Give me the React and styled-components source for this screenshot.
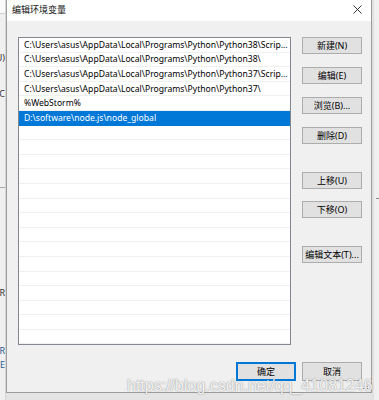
import styled, { createGlobalStyle } from 'styled-components';

const GlobalStyle = createGlobalStyle`
  html, body {
    margin: 0;
    padding: 0;
    background: #e6e6e6;
  }
  * {
    box-sizing: border-box;
  }
`;

const paths = [
  'C:\\Users\\asus\\AppData\\Local\\Programs\\Python\\Python38\\Scrip...',
  'C:\\Users\\asus\\AppData\\Local\\Programs\\Python\\Python38\\',
  'C:\\Users\\asus\\AppData\\Local\\Programs\\Python\\Python37\\Scrip...',
  'C:\\Users\\asus\\AppData\\Local\\Programs\\Python\\Python37\\',
  '%WebStorm%',
  'D:\\software\\node.js\\node_global',
];

const sideButtons = [
  { label: '新建(N)', top: 0 },
  { label: '编辑(E)', top: 13 },
  { label: '浏览(B)...', top: 13 },
  { label: '删除(D)', top: 13 },
  { label: '上移(U)', top: 28 },
  { label: '下移(O)', top: 12 },
  { label: '编辑文本(T)...', top: 28 },
];

const TOTAL_ROWS = 21;

export default function App() {
  const rows = Array.from({ length: TOTAL_ROWS }, (_, i) => paths[i] || '');

  return (
    <>
      <GlobalStyle />
      <Screen>
        <LeftPeek>
          <PeekTop />
          <PeekText $top={39}>(U)</PeekText>
          <PeekText $top={26}>C</PeekText>
          <PeekLine $top={88} />
          <PeekText $top={100}>R</PeekText>
          <PeekText $top={48} $blue>R</PeekText>
          <PeekText $top={4} $blue>DE</PeekText>
        </LeftPeek>

        <Dialog>
          <TitleBar>
            <Title>编辑环境变量</Title>
            <CloseButton>
              <svg width="9" height="9" viewBox="0 0 9 9">
                <path d="M0.5 0.5 L8.5 8.5 M8.5 0.5 L0.5 8.5" stroke="#222" strokeWidth="0.9" fill="none" />
              </svg>
            </CloseButton>
          </TitleBar>

          <Body>
            <Main>
              <PathList>
                {rows.map((text, i) => (
                  <Row key={i} $selected={i === 5}>
                    {text}
                  </Row>
                ))}
              </PathList>

              <SideColumn>
                {sideButtons.map((b) => (
                  <Button key={b.label} $top={b.top}>
                    {b.label}
                  </Button>
                ))}
              </SideColumn>
            </Main>

            <Footer>
              <Button $primary $tall>确定</Button>
              <Button $tall>取消</Button>
            </Footer>
          </Body>

          <Grip>
            <svg width="6" height="6" viewBox="0 0 6 6">
              <rect x="4" y="0" width="1" height="1" fill="#9a9a9a" />
              <rect x="2" y="2" width="1" height="1" fill="#9a9a9a" />
              <rect x="4" y="2" width="1" height="1" fill="#9a9a9a" />
              <rect x="0" y="4" width="1" height="1" fill="#9a9a9a" />
              <rect x="2" y="4" width="1" height="1" fill="#9a9a9a" />
              <rect x="4" y="4" width="1" height="1" fill="#9a9a9a" />
            </svg>
          </Grip>
        </Dialog>

        <RightPeek>
          <RightTick />
        </RightPeek>

        <Watermark>https://blog.csdn.net/qq_41081246</Watermark>
      </Screen>
    </>
  );
}

const Screen = styled.div`
  position: relative;
  width: 379px;
  height: 400px;
  overflow: hidden;
  display: flex;
  align-items: flex-start;
  background: #e4e4e4;
  font-family: 'Noto Sans', 'Noto Sans CJK SC', sans-serif;
  color: #000;
`;

const LeftPeek = styled.div`
  width: 6px;
  height: 400px;
  flex-shrink: 0;
  display: flex;
  flex-direction: column;
  background: #f0f0f0;
  overflow: hidden;
  border-right: 1px solid #d6d6d6;
`;

const PeekTop = styled.div`
  height: 14px;
  background: #fafafa;
  border-bottom: 1px solid #cfcfcf;
  flex-shrink: 0;
`;

const PeekText = styled.div`
  margin-top: ${(p) => p.$top}px;
  display: flex;
  justify-content: flex-end;
  white-space: nowrap;
  font-size: 9px;
  line-height: 10px;
  color: ${(p) => (p.$blue ? '#2a5b8f' : '#333')};
`;

const PeekLine = styled.div`
  margin-top: ${(p) => p.$top}px;
  height: 1px;
  background: #a8a8a8;
  flex-shrink: 0;
`;

const Dialog = styled.div`
  position: relative;
  width: 366px;
  height: 393px;
  flex-shrink: 0;
  display: flex;
  flex-direction: column;
  background: #f0f0f0;
  border: 1px solid #9c9c9c;
  border-top: none;
`;

const TitleBar = styled.div`
  height: 21px;
  flex-shrink: 0;
  display: flex;
  align-items: center;
  justify-content: space-between;
  padding: 0 6px 2px 5px;
  background: #fff;
`;

const Title = styled.span`
  font-size: 9px;
  line-height: 1;
  color: #111;
`;

const CloseButton = styled.div`
  display: flex;
  align-items: center;
  justify-content: center;
  width: 16px;
  height: 16px;
`;

const Body = styled.div`
  flex: 1;
  display: flex;
  flex-direction: column;
  padding: 16px 9px 10px 11px;
`;

const Main = styled.div`
  display: flex;
  gap: 11px;
`;

const PathList = styled.div`
  width: 274px;
  height: 308px;
  background: #fff;
  border: 1px solid #828790;
  overflow: hidden;
  display: flex;
  flex-direction: column;
`;

const Row = styled.div`
  height: 14.6px;
  flex-shrink: 0;
  display: flex;
  align-items: center;
  padding: 0 5px;
  font-size: 8.6px;
  white-space: nowrap;
  overflow: hidden;
  color: ${(p) => (p.$selected ? '#fff' : '#000')};
  background: ${(p) => (p.$selected ? '#0078d7' : '#fff')};
  border-bottom: 1px solid ${(p) => (p.$selected ? '#0078d7' : '#f0f0f0')};
`;

const SideColumn = styled.div`
  display: flex;
  flex-direction: column;
`;

const Button = styled.div`
  width: 60px;
  height: ${(p) => (p.$tall ? 19 : 17)}px;
  margin-top: ${(p) => p.$top || 0}px;
  display: flex;
  align-items: center;
  justify-content: center;
  font-size: 9px;
  white-space: nowrap;
  background: #e1e1e1;
  border: ${(p) => (p.$primary ? '2px solid #0078d7' : '1px solid #adadad')};
  color: #000;
`;

const Footer = styled.div`
  margin-top: 17px;
  display: flex;
  justify-content: flex-end;
  gap: 6px;
`;

const Grip = styled.div`
  position: absolute;
  right: 2px;
  bottom: 2px;
  width: 6px;
  height: 6px;
  display: flex;
`;

const RightPeek = styled.div`
  flex: 1;
  height: 400px;
  background: #f0f0f0;
  border-left: 2px solid #e0e0e0;
  display: flex;
  flex-direction: column;
  padding-top: 198px;
  padding-left: 2px;
`;

const RightTick = styled.div`
  width: 3px;
  height: 1px;
  background: #888;
`;

const Watermark = styled.div`
  position: absolute;
  left: 127px;
  bottom: 6px;
  font-family: 'Liberation Sans', Arial, sans-serif;
  font-size: 16px;
  line-height: 1;
  white-space: nowrap;
  color: rgba(255, 255, 255, 0.9);
  text-shadow: 0 0 1px rgba(90, 90, 90, 0.6), 0 0 2px rgba(120, 120, 120, 0.4);
  pointer-events: none;
`;
